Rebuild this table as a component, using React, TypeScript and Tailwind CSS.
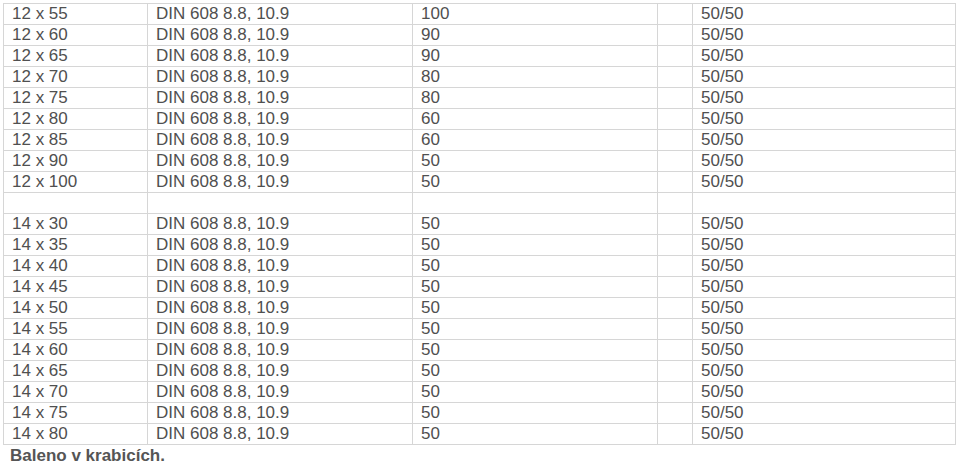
const rows: (string[] | null)[] = [
  ["12 x 55", "DIN 608 8.8, 10.9", "100", "50/50"],
  ["12 x 60", "DIN 608 8.8, 10.9", "90", "50/50"],
  ["12 x 65", "DIN 608 8.8, 10.9", "90", "50/50"],
  ["12 x 70", "DIN 608 8.8, 10.9", "80", "50/50"],
  ["12 x 75", "DIN 608 8.8, 10.9", "80", "50/50"],
  ["12 x 80", "DIN 608 8.8, 10.9", "60", "50/50"],
  ["12 x 85", "DIN 608 8.8, 10.9", "60", "50/50"],
  ["12 x 90", "DIN 608 8.8, 10.9", "50", "50/50"],
  ["12 x 100", "DIN 608 8.8, 10.9", "50", "50/50"],
  null,
  ["14 x 30", "DIN 608 8.8, 10.9", "50", "50/50"],
  ["14 x 35", "DIN 608 8.8, 10.9", "50", "50/50"],
  ["14 x 40", "DIN 608 8.8, 10.9", "50", "50/50"],
  ["14 x 45", "DIN 608 8.8, 10.9", "50", "50/50"],
  ["14 x 50", "DIN 608 8.8, 10.9", "50", "50/50"],
  ["14 x 55", "DIN 608 8.8, 10.9", "50", "50/50"],
  ["14 x 60", "DIN 608 8.8, 10.9", "50", "50/50"],
  ["14 x 65", "DIN 608 8.8, 10.9", "50", "50/50"],
  ["14 x 70", "DIN 608 8.8, 10.9", "50", "50/50"],
  ["14 x 75", "DIN 608 8.8, 10.9", "50", "50/50"],
  ["14 x 80", "DIN 608 8.8, 10.9", "50", "50/50"],
];

const cell = "h-[21px] border border-[#d6d6d6] px-[8px] py-0 align-middle leading-[20px]";

export default function App() {
  return (
    <div className="bg-white pl-[3px] pt-[3px] font-['Liberation_Sans',Arial,sans-serif] text-[17px] text-[#505050]">
      <table className="w-[952px] table-fixed border-collapse">
        <colgroup>
          <col className="w-[144px]" />
          <col className="w-[265px]" />
          <col className="w-[245px]" />
          <col className="w-[35px]" />
          <col className="w-[263px]" />
        </colgroup>
        <tbody>
          {rows.map((r, i) => (
            <tr key={i}>
              <td className={cell}>{r?.[0]}</td>
              <td className={cell}>{r?.[1]}</td>
              <td className={cell}>{r?.[2]}</td>
              <td className={cell}></td>
              <td className={cell}>{r?.[3]}</td>
            </tr>
          ))}
        </tbody>
      </table>
      <p className="pl-[7px] pt-[1px] font-bold leading-[20px] text-[#555]">Baleno v krabicích.</p>
    </div>
  );
}
